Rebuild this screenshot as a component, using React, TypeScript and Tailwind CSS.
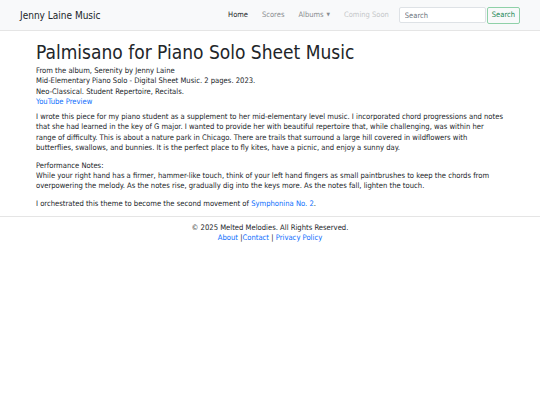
import { useState } from "react";

const font = { fontFamily: '"DejaVu Sans Condensed", "DejaVu Sans", Verdana, sans-serif' };

export default function App() {
  const [query, setQuery] = useState("");

  return (
    <div className="min-h-[405px] bg-white font-stretch-condensed text-[#212529]" style={font}>
      <nav className="flex h-[31px] items-center border-b border-[#e5e5e5] bg-[#f8f9fa] pl-[20px] pr-[20px]">
        <a className="text-[10px] text-[#212529]" href="#">
          Jenny Laine Music
        </a>
        <ul className="ml-auto flex items-center text-[7.5px]">
          <li className="px-[7px] text-[#212529]">Home</li>
          <li className="px-[7px] text-[#8a8d90]">Scores</li>
          <li className="flex items-center gap-[3px] px-[7px] text-[#8a8d90]">
            Albums
            <span className="text-[5px]">▼</span>
          </li>
          <li className="px-[7px] text-[#c5c7c9]">Coming Soon</li>
        </ul>
        <form className="ml-[3px] flex items-center gap-[1px]" onSubmit={(e) => e.preventDefault()}>
          <input
            value={query}
            onChange={(e) => setQuery(e.target.value)}
            placeholder="Search"
            className="h-[16px] w-[87px] rounded-[2px] border border-[#dee2e6] bg-white px-[5px] text-[7.5px] text-[#212529] placeholder:text-[#6c757d] focus:outline-none"
          />
          <button
            type="submit"
            className="h-[17px] rounded-[2px] border border-[#8fd1a8] px-[4px] text-[7.5px] text-[#198754]"
          >
            Search
          </button>
        </form>
      </nav>

      <main className="pl-[36px] pr-[35px] pt-[9px]">
        <h1 className="text-[19px] leading-[24px] text-[#212529]">
          Palmisano for Piano Solo Sheet Music
        </h1>
        <div className="mt-[2px] text-[7.6px] leading-[10.3px]">
          <p>From the album, Serenity by Jenny Laine</p>
          <p>Mid-Elementary Piano Solo - Digital Sheet Music. 2 pages. 2023.</p>
          <p>Neo-Classical. Student Repertoire, Recitals.</p>
          <a href="#" className="text-[#0d6efd]">
            YouTube Preview
          </a>
        </div>
        <p className="mt-[5px] text-[7.6px] leading-[10.3px]">
          I wrote this piece for my piano student as a supplement to her mid-elementary level music. I
          incorporated chord progressions and notes that she had learned in the key of G major. I wanted to
          provide her with beautiful repertoire that, while challenging, was within her range of difficulty.
          This is about a nature park in Chicago. There are trails that surround a large hill covered in
          wildflowers with butterflies, swallows, and bunnies. It is the perfect place to fly kites, have a
          picnic, and enjoy a sunny day.
        </p>
        <p className="mt-[7.5px] text-[7.6px] leading-[10.3px]">
          Performance Notes:
          <br />
          While your right hand has a firmer, hammer-like touch, think of your left hand fingers as small
          paintbrushes to keep the chords from overpowering the melody. As the notes rise, gradually dig into
          the keys more. As the notes fall, lighten the touch.
        </p>
        <p className="mt-[7.5px] text-[7.6px] leading-[10.3px]">
          I orchestrated this theme to become the second movement of{" "}
          <a href="#" className="text-[#0d6efd]">
            Symphonina No. 2
          </a>
          .
        </p>
      </main>

      <footer className="mt-[6px] border-t border-[#e5e5e5] pt-[6px] text-center text-[7.6px] leading-[10.8px]">
        <p>© 2025 Melted Melodies. All Rights Reserved.</p>
        <p>
          <a href="#" className="text-[#0d6efd]">
            About
          </a>{" "}
          |
          <a href="#" className="text-[#0d6efd]">
            Contact
          </a>{" "}
          |{" "}
          <a href="#" className="text-[#0d6efd]">
            Privacy Policy
          </a>
        </p>
      </footer>
    </div>
  );
}
